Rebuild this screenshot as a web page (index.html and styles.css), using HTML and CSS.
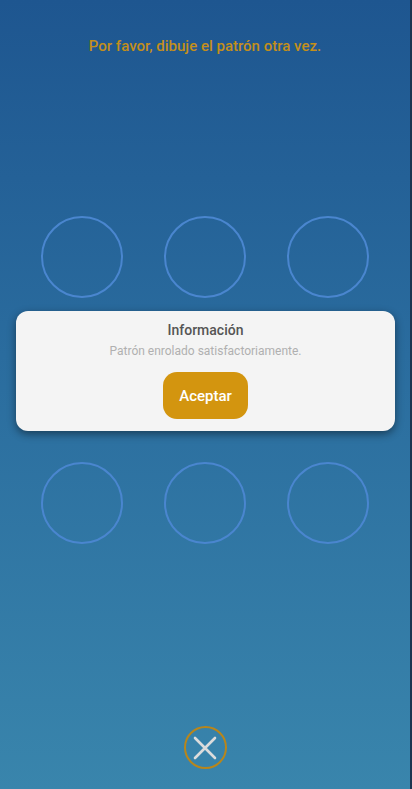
FILE: index.html
```html
<!DOCTYPE html>
<html lang="es">
<head>
  <meta charset="UTF-8" />
  <meta name="viewport" content="width=device-width, initial-scale=1.0"/>
  <title>Patrón</title>
  <link rel="stylesheet" href="styles.css">
</head>
<body>

  <div class="screen">
    <p class="prompt">Por favor, dibuje el patrón otra vez.</p>

    <div class="pattern">
      <span class="dot"></span>
      <span class="dot"></span>
      <span class="dot"></span>
      <span class="dot"></span>
      <span class="dot"></span>
      <span class="dot"></span>
      <span class="dot"></span>
      <span class="dot"></span>
      <span class="dot"></span>
    </div>

    <button class="close-btn" aria-label="Cerrar">
      <svg width="24" height="24" viewBox="0 0 24 24">
        <path d="M2 2 L22 22 M22 2 L2 22" stroke="#dcdcdc" stroke-width="2.6" stroke-linecap="round" fill="none"/>
      </svg>
    </button>

    <!-- alert shown after the pattern is saved -->
    <div class="dialog">
      <h3>Información</h3>
      <p>Patrón enrolado satisfactoriamente.</p>
      <button class="ok-btn">Aceptar</button>
    </div>
  </div>

</body>
</html>
```

FILE: styles.css
```css
html, body {
  margin: 0;
  padding: 0;
}

body {
  font-family: Roboto, "Noto Sans", sans-serif;
}

.screen {
  position: relative;
  height: 789px;
  box-sizing: border-box;
  display: flex;
  flex-direction: column;
  align-items: center;
  background: linear-gradient(to bottom, #1e5690 0%, #2a6c9e 45%, #3985ac 100%);
  border-right: 2px solid #1b3550;
}

.prompt {
  margin: 36px 0 0;
  color: #c48f1a;
  font-size: 15px;
  font-weight: 500;
  line-height: 20px;
}

.pattern {
  margin-top: 160px;
  display: grid;
  grid-template-columns: repeat(3, 82px);
  grid-auto-rows: 82px;
  column-gap: 41px;
  row-gap: 41px;
}

.dot {
  box-sizing: border-box;
  border: 2px solid #4a86cf;
  border-radius: 50%;
}

.close-btn {
  margin-top: auto;
  margin-bottom: 20px;
  width: 43px;
  height: 43px;
  padding: 0;
  border: 2px solid #b8861b;
  border-radius: 50%;
  background: transparent;
  display: flex;
  align-items: center;
  justify-content: center;
}

.dialog {
  position: absolute;
  left: 16px;
  top: 311px;
  width: 379px;
  height: 120px;
  box-sizing: border-box;
  padding-top: 10px;
  background: #f4f4f4;
  border-radius: 12px;
  box-shadow: 0 3px 8px rgba(0, 0, 0, 0.45);
  display: flex;
  flex-direction: column;
  align-items: center;
}

.dialog h3 {
  margin: 0;
  color: #555;
  font-size: 14px;
  font-weight: 500;
  line-height: 18px;
}

.dialog p {
  margin: 4px 0 0;
  color: #b0b0b0;
  font-size: 12px;
  line-height: 16px;
}

.ok-btn {
  margin-top: 13px;
  width: 85px;
  height: 47px;
  border: none;
  border-radius: 14px;
  background-color: #d3950f;
  color: white;
  font-family: Roboto, "Noto Sans", sans-serif;
  font-size: 15px;
  font-weight: 500;
}
```
